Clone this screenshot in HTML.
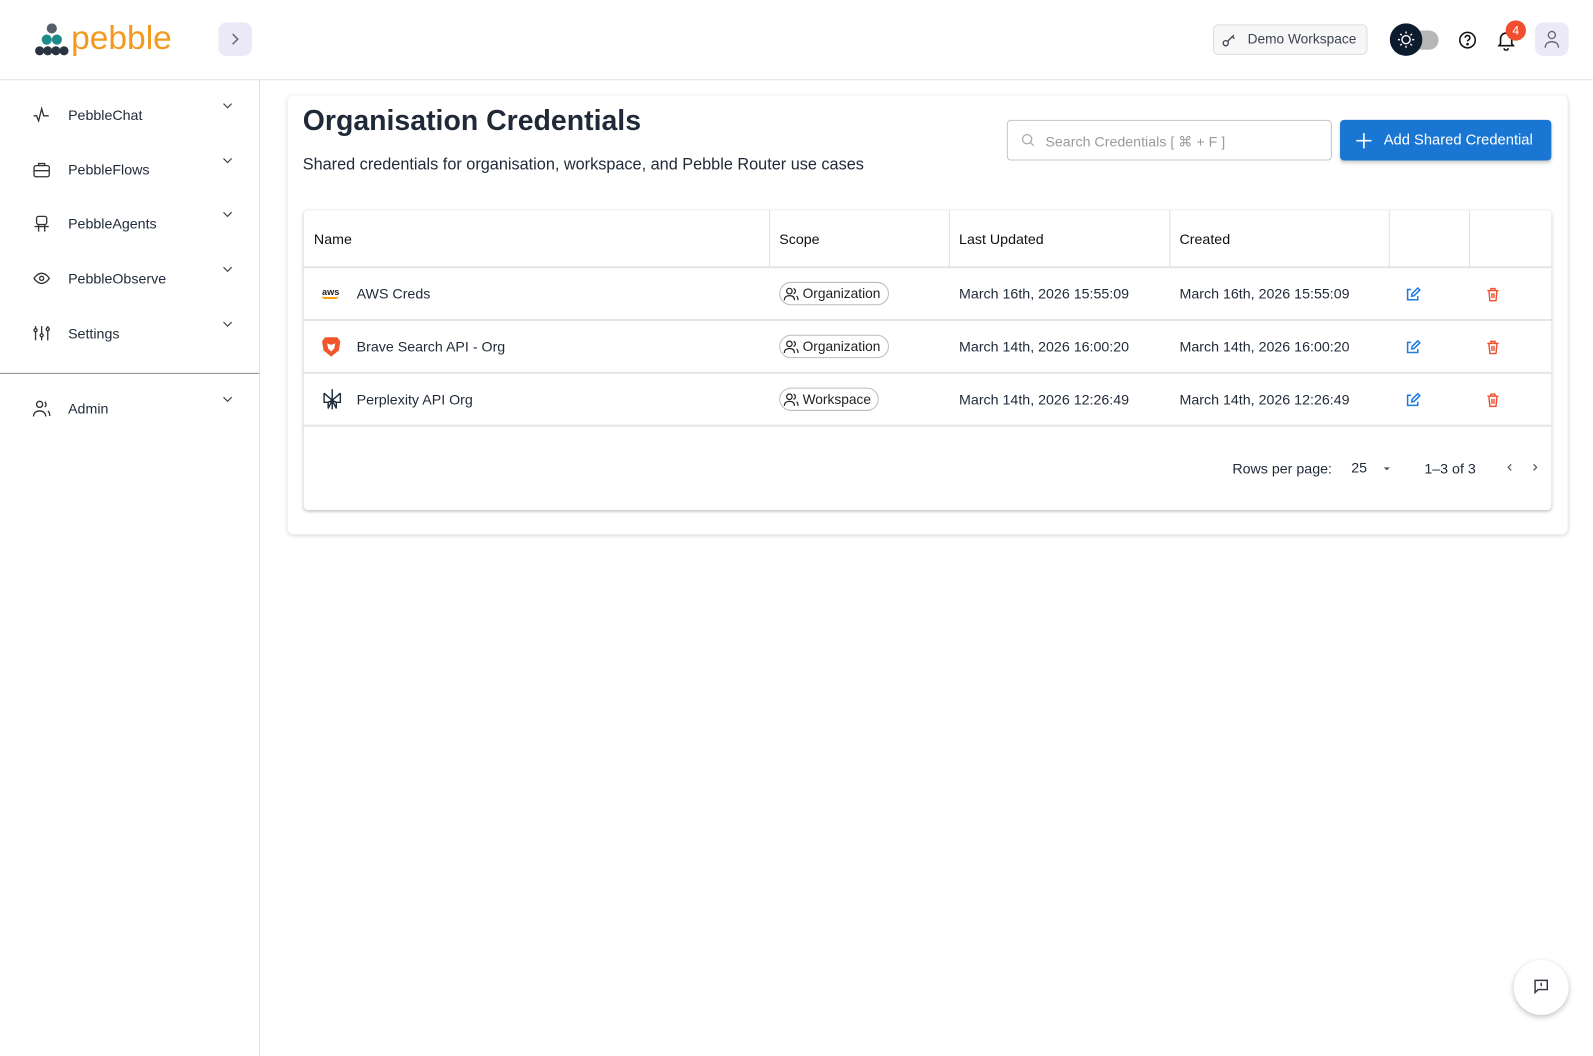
<!DOCTYPE html>
<html><head><meta charset="utf-8"><style>
*{box-sizing:border-box;margin:0;padding:0}
body{width:1593px;height:1039px;overflow:hidden;background:#fff;font-family:"Liberation Sans",sans-serif;color:#1f2937;position:relative}
#w{position:absolute;left:0;top:0;width:1568px;height:1023px;transform:scale(1.01595);transform-origin:0 0}
.hdr{position:absolute;left:0;top:0;width:1568px;height:79px;border-bottom:1px solid #e0e0e0}
.side{position:absolute;left:0;top:79px;width:256px;height:960px;border-right:1px solid #e0e0e0}
.nav{position:absolute;left:0;width:255px;height:54px;font-size:14px;color:#1f2937}
.nav svg.i{position:absolute;left:32px;top:50%;transform:translateY(-50%)}
.nav span{position:absolute;left:67px;top:50%;transform:translateY(-50%)}
.nav .ch{position:absolute;left:218px;top:12px}
.card{position:absolute;left:283px;top:94px;width:1260px;height:432px;border-radius:6px;box-shadow:0 1px 4px rgba(0,0,0,.18);background:#fff}
.tbl{position:absolute;left:299px;top:207px;width:1228px;height:295px;border-radius:4px;box-shadow:0 1px 3px rgba(0,0,0,.25);background:#fff}
.row{position:absolute;left:0;width:1228px;border-bottom:2px solid #e5e5e5;font-size:14px}
.c{position:absolute;top:50%;transform:translateY(-50%);white-space:nowrap}
.chip{position:absolute;top:50%;transform:translateY(-50%);left:468px;height:23px;border:1px solid #bdbdbd;border-radius:12px;font-size:13.5px;padding:0 7px 0 3px;display:flex;align-items:center;gap:3px;color:#222}
.vl{position:absolute;top:0;height:56px;width:1px;background:#e0e0e0}
</style></head><body><div id="w">
<div class="hdr">
 <svg style="position:absolute;left:34px;top:22px" width="34" height="34" viewBox="0 0 34 34">
  <circle cx="17" cy="6" r="5" fill="#545e6b"/>
  <circle cx="12" cy="17" r="5" fill="#1f8a8a"/><circle cx="22" cy="17" r="5" fill="#1f8a8a"/>
  <circle cx="5" cy="28" r="4.5" fill="#2a3341"/><circle cx="13" cy="28" r="4.5" fill="#2a3341"/><circle cx="21" cy="28" r="4.5" fill="#2a3341"/><circle cx="29" cy="28" r="4.5" fill="#2a3341"/>
 </svg>
 <div style="position:absolute;left:70px;top:17px;font-size:33px;line-height:40px;color:#f39a1e">pebble</div>
 <div style="position:absolute;left:215px;top:22px;width:33px;height:33px;border-radius:8px;background:#ebe8f8"><svg style="position:absolute;left:10px;top:10px" width="13" height="13" viewBox="0 0 13 13"><path d="M4 1.5l5 5-5 5" stroke="#5a6473" stroke-width="1.4" fill="none"/></svg></div>
 <div style="position:absolute;left:1194px;top:24px;width:152px;height:30px;border:1px solid #ddd;border-radius:5px;background:#f7f7f7;font-size:13.5px;color:#3d4452;padding:6px 0 0 33px">Demo Workspace</div>
 <svg style="position:absolute;left:1202px;top:31px" width="16" height="16" viewBox="0 0 16 16"><circle cx="4.5" cy="11.5" r="2.5" stroke="#3d4452" stroke-width="1.3" fill="none"/><path d="M6.5 9.5l6-6M11 5l2 2" stroke="#3d4452" stroke-width="1.3" fill="none"/></svg>
 <div style="position:absolute;left:1372px;top:30px;width:44px;height:19px;border-radius:10px;background:#b7b7b7"></div>
 <div style="position:absolute;left:1368px;top:23px;width:32px;height:32px;border-radius:50%;background:#0d1b2e"></div>
 <svg style="position:absolute;left:1375px;top:30px" width="18" height="18" viewBox="0 0 18 18" stroke="#fff" stroke-width="1.4" fill="none"><circle cx="9" cy="9" r="4"/><path d="M9 1v2M9 15v2M1 9h2M15 9h2M3.3 3.3l1.4 1.4M13.3 13.3l1.4 1.4M3.3 14.7l1.4-1.4M13.3 4.7l1.4-1.4"/></svg>
 <svg style="position:absolute;left:1435px;top:30px" width="19" height="19" viewBox="0 0 20 20" fill="none" stroke="#111" stroke-width="1.6"><circle cx="10" cy="10" r="8"/><path d="M7.6 7.6a2.4 2.4 0 1 1 3.4 2.2c-.7.3-1 .8-1 1.5"/><circle cx="10" cy="14.2" r=".6" fill="#111"/></svg>
 <svg style="position:absolute;left:1473px;top:29px" width="19" height="21" viewBox="0 0 19 21" fill="none" stroke="#111" stroke-width="1.6"><path d="M4 14V9a5.5 5.5 0 0 1 11 0v5l1.5 2h-14z"/><path d="M7.5 18.5a2 2 0 0 0 4 0"/></svg>
 <div style="position:absolute;left:1482px;top:20px;width:20px;height:20px;border-radius:50%;background:#f04e2e;color:#fff;font-size:12px;text-align:center;line-height:20px">4</div>
 <div style="position:absolute;left:1511px;top:22px;width:33px;height:33px;border-radius:8px;background:#ebe8f8"><svg style="position:absolute;left:8px;top:7px" width="17" height="19" viewBox="0 0 17 19" fill="none" stroke="#5a6473" stroke-width="1.3"><circle cx="8.5" cy="5.5" r="3.5"/><path d="M2 18c0-4 3-6 6.5-6s6.5 2 6.5 6"/></svg></div>
</div>
<div class="side">
 <div class="nav" style="top:7px"><svg class="i" width="18" height="18" viewBox="0 0 18 18" fill="none" stroke="#333" stroke-width="1.3"><path d="M1 10h3l2 5 3-12 2 7h5"/></svg><span>PebbleChat</span><svg class="ch" width="12" height="12" viewBox="0 0 12 12"><path d="M2 4l4 4 4-4" stroke="#444" stroke-width="1.2" fill="none"/></svg></div>
 <div class="nav" style="top:61px"><svg class="i" width="18" height="18" viewBox="0 0 18 18" fill="none" stroke="#333" stroke-width="1.3"><rect x="1.5" y="5" width="15" height="11" rx="2"/><path d="M6 5V3h6v2M1.5 10h15"/></svg><span>PebbleFlows</span><svg class="ch" width="12" height="12" viewBox="0 0 12 12"><path d="M2 4l4 4 4-4" stroke="#444" stroke-width="1.2" fill="none"/></svg></div>
 <div class="nav" style="top:114px"><svg class="i" width="18" height="18" viewBox="0 0 18 18" fill="none" stroke="#333" stroke-width="1.3"><rect x="4" y="2" width="10" height="8" rx="2"/><path d="M2 12h14M6 10v7M12 10v7M7 6h.1M11 6h.1"/></svg><span>PebbleAgents</span><svg class="ch" width="12" height="12" viewBox="0 0 12 12"><path d="M2 4l4 4 4-4" stroke="#444" stroke-width="1.2" fill="none"/></svg></div>
 <div class="nav" style="top:168px"><svg class="i" width="18" height="18" viewBox="0 0 18 18" fill="none" stroke="#333" stroke-width="1.3"><path d="M1.5 9s3-5 7.5-5 7.5 5 7.5 5-3 5-7.5 5-7.5-5-7.5-5z"/><circle cx="9" cy="9" r="2"/></svg><span>PebbleObserve</span><svg class="ch" width="12" height="12" viewBox="0 0 12 12"><path d="M2 4l4 4 4-4" stroke="#444" stroke-width="1.2" fill="none"/></svg></div>
 <div class="nav" style="top:222px"><svg class="i" width="18" height="18" viewBox="0 0 18 18" fill="none" stroke="#333" stroke-width="1.3"><path d="M3 2v14M9 2v14M15 2v14"/><circle cx="3" cy="6" r="1.5" fill="#fff"/><circle cx="9" cy="11" r="1.5" fill="#fff"/><circle cx="15" cy="5" r="1.5" fill="#fff"/></svg><span>Settings</span><svg class="ch" width="12" height="12" viewBox="0 0 12 12"><path d="M2 4l4 4 4-4" stroke="#444" stroke-width="1.2" fill="none"/></svg></div>
 <div style="position:absolute;left:0;top:288px;width:255px;height:1px;background:#888"></div>
 <div class="nav" style="top:296px"><svg class="i" width="18" height="18" viewBox="0 0 18 18" fill="none" stroke="#333" stroke-width="1.3"><circle cx="7" cy="5" r="3"/><path d="M1 17c0-3.5 2.5-5.5 6-5.5s6 2 6 5.5M12 2.5a3 3 0 0 1 0 5M15 11.5c1.3.8 2 2.5 2 5"/></svg><span>Admin</span><svg class="ch" width="12" height="12" viewBox="0 0 12 12"><path d="M2 4l4 4 4-4" stroke="#444" stroke-width="1.2" fill="none"/></svg></div>
</div>
<div class="card"></div>
<div style="position:absolute;left:298px;top:103px;font-size:28px;font-weight:bold;color:#1f2937">Organisation Credentials</div>
<div style="position:absolute;left:298px;top:154px;font-size:16px;color:#1f2937">Shared credentials for organisation, workspace, and Pebble Router use cases</div>
<div style="position:absolute;left:991px;top:118px;width:320px;height:40px;border:1px solid #c4c4c4;border-radius:4px;font-size:14px;color:#9a9a9a;padding:12px 0 0 37px">Search Credentials [ ⌘ + F ]</div>
<svg style="position:absolute;left:1005px;top:131px" width="14" height="14" viewBox="0 0 14 14" fill="none" stroke="#aaa" stroke-width="1.3"><circle cx="6" cy="6" r="4.5"/><path d="M9.5 9.5l3 3"/></svg>
<div style="position:absolute;left:1319px;top:118px;width:208px;height:40px;border-radius:4px;background:#1976d2;box-shadow:0 2px 3px rgba(0,0,0,.2);color:#fff;font-size:14.5px;padding:12px 0 0 43px">Add Shared Credential</div>
<svg style="position:absolute;left:1334px;top:130px" width="17" height="17" viewBox="0 0 17 17" stroke="#fff" stroke-width="1.6"><path d="M8.5 1v15M1 8.5h15"/></svg>
<div class="tbl">
 <div class="row" style="top:0;height:57px;color:#111">
  <div class="c" style="left:10px">Name</div><div class="c" style="left:468px">Scope</div><div class="c" style="left:645px">Last Updated</div><div class="c" style="left:862px">Created</div>
  <div class="vl" style="left:458px"></div><div class="vl" style="left:635px"></div><div class="vl" style="left:852px"></div><div class="vl" style="left:1068px"></div><div class="vl" style="left:1147px"></div>
 </div>
 <div class="row" style="top:57px;height:52px">
  <div class="c" style="left:18px;font-size:9px;font-weight:bold;color:#222;line-height:8px">aws<div style="width:16px;height:3px;border-bottom:2px solid #f90;border-radius:0 0 8px 8px"></div></div>
  <div class="c" style="left:52px">AWS Creds</div>
  <div class="chip"><svg width="16" height="14" viewBox="0 0 16 14" fill="none" stroke="#222" stroke-width="1.2"><circle cx="6" cy="4" r="2.7"/><path d="M1 13c0-3 2-4.5 5-4.5s5 1.5 5 4.5M10 1.5a2.6 2.6 0 0 1 0 5M13 9c1 .6 1.5 2 1.5 4"/></svg>Organization</div>
  <div class="c" style="left:645px">March 16th, 2026 15:55:09</div><div class="c" style="left:862px">March 16th, 2026 15:55:09</div>
 </div>
 <div class="row" style="top:109px;height:52px">
  <svg class="c" style="left:17px" width="20" height="22" viewBox="0 0 20 22"><path d="M4 2h12l3 4-1.5 9L10 21 2.5 15 1 6z" fill="#f1562b"/><path d="M6 8l4 1.5L14 8l-1 5-3 3-3-3z" fill="#fff"/></svg>
  <div class="c" style="left:52px">Brave Search API - Org</div>
  <div class="chip"><svg width="16" height="14" viewBox="0 0 16 14" fill="none" stroke="#222" stroke-width="1.2"><circle cx="6" cy="4" r="2.7"/><path d="M1 13c0-3 2-4.5 5-4.5s5 1.5 5 4.5M10 1.5a2.6 2.6 0 0 1 0 5M13 9c1 .6 1.5 2 1.5 4"/></svg>Organization</div>
  <div class="c" style="left:645px">March 14th, 2026 16:00:20</div><div class="c" style="left:862px">March 14th, 2026 16:00:20</div>
 </div>
 <div class="row" style="top:161px;height:52px">
  <svg class="c" style="left:18px" width="20" height="22" viewBox="0 0 20 22" fill="none" stroke="#1d2b3a" stroke-width="1.4"><path d="M2 5l8 7 8-7M10 1v20M2 5v9h5M18 5v9h-5M6 14l4-2 4 2v6l-4-8-4 8z"/></svg>
  <div class="c" style="left:52px">Perplexity API Org</div>
  <div class="chip"><svg width="16" height="14" viewBox="0 0 16 14" fill="none" stroke="#222" stroke-width="1.2"><circle cx="6" cy="4" r="2.7"/><path d="M1 13c0-3 2-4.5 5-4.5s5 1.5 5 4.5M10 1.5a2.6 2.6 0 0 1 0 5M13 9c1 .6 1.5 2 1.5 4"/></svg>Workspace</div>
  <div class="c" style="left:645px">March 14th, 2026 12:26:49</div><div class="c" style="left:862px">March 14th, 2026 12:26:49</div>
 </div>
 <div style="position:absolute;left:914px;top:246px;font-size:14px">Rows per page:</div>
 <div style="position:absolute;left:1031px;top:245px;font-size:14px">25</div>
 <svg style="position:absolute;left:1062px;top:250px" width="8" height="8"><path d="M1 3h6L4 6z" fill="#555"/></svg>
 <div style="position:absolute;left:1103px;top:246px;font-size:14px">1–3 of 3</div>
 <svg style="position:absolute;left:1182px;top:248px" width="10" height="10" viewBox="0 0 10 10"><path d="M6.5 2l-3 3 3 3" stroke="#555" stroke-width="1.2" fill="none"/></svg>
 <svg style="position:absolute;left:1207px;top:248px" width="10" height="10" viewBox="0 0 10 10"><path d="M3.5 2l3 3-3 3" stroke="#555" stroke-width="1.2" fill="none"/></svg>
</div>
<svg width="0" height="0" style="position:absolute"><defs>
<g id="ed"><path d="M6 3H2.5v10h10V9.5" stroke="#1e7be0" stroke-width="1.5" fill="none"/><path d="M6.5 9.5l.4-2.4L12.5 1.5l2 2-5.6 5.6z" stroke="#1e7be0" stroke-width="1.5" fill="none"/></g>
<g id="tr"><path d="M2 4h11M5.5 4V2h4v2M3.5 4l1 10h6l1-10M6.5 6.5v5M8.5 6.5v5" stroke="#f04e2e" stroke-width="1.4" fill="none"/></g>
</defs></svg>
<svg style="position:absolute;left:1383px;top:282px" width="16" height="16"><use href="#ed"/></svg>
<svg style="position:absolute;left:1462px;top:282px" width="16" height="16"><use href="#tr"/></svg>
<svg style="position:absolute;left:1383px;top:334px" width="16" height="16"><use href="#ed"/></svg>
<svg style="position:absolute;left:1462px;top:334px" width="16" height="16"><use href="#tr"/></svg>
<svg style="position:absolute;left:1383px;top:386px" width="16" height="16"><use href="#ed"/></svg>
<svg style="position:absolute;left:1462px;top:386px" width="16" height="16"><use href="#tr"/></svg>
<div style="position:absolute;left:1490px;top:945px;width:54px;height:54px;border-radius:50%;background:#fff;box-shadow:0 2px 6px rgba(0,0,0,.25)"></div>
<svg style="position:absolute;left:1509px;top:963px" width="16" height="16" viewBox="0 0 16 16" fill="none" stroke="#2e3440" stroke-width="1.4"><path d="M2 2h12v9H5l-3 3z"/><path d="M8 4.5v3.2M8 9v.3"/></svg>
</div></body></html>
